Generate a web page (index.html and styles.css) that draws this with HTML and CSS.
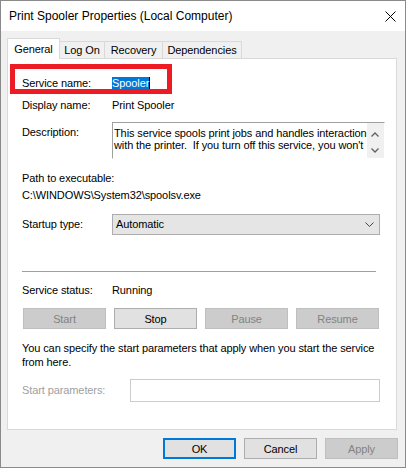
FILE: index.html
```html
<!DOCTYPE html>
<html>
<head>
	<title>Print Spooler Properties (Local Computer)</title>
	<link rel="stylesheet" href="styles.css">
</head>
<body>
<div class="window">
	<div class="titlebar">
		<span class="caption">Print Spooler Properties (Local Computer)</span>
		<span class="close">
			<svg width="11" height="11" viewBox="0 0 11 11"><path d="M0.5 0.5L10.5 10.5M10.5 0.5L0.5 10.5" stroke="#000" stroke-width="1" fill="none"/></svg>
		</span>
	</div>
	<div class="client">
		<div class="tabs">
			<div class="tab active t-general">General</div>
			<div class="tab t-logon">Log On</div>
			<div class="tab t-recovery">Recovery</div>
			<div class="tab t-deps">Dependencies</div>
		</div>
		<div class="page">
			<!-- red marker drawn over the service name -->
			<div class="mark"></div>

			<div class="field r-name">
				<span class="lbl">Service name:</span>
				<span class="sel">Spooler</span>
			</div>
			<div class="field r-display">
				<span class="lbl">Display name:</span>
				<span>Print Spooler</span>
			</div>
			<div class="field r-desc">
				<span class="lbl">Description:</span>
				<div class="desc">
					<div class="desc-text">This service spools print jobs and handles interaction
with the printer.  If you turn off this service, you won't</div>
					<div class="vscroll">
						<svg class="arr-up" width="8" height="5" viewBox="0 0 8 5"><path d="M0.5 4.5L4 1L7.5 4.5" stroke="#606060" stroke-width="1.3" fill="none"/></svg>
						<svg class="arr-down" width="8" height="5" viewBox="0 0 8 5"><path d="M0.5 0.5L4 4L7.5 0.5" stroke="#606060" stroke-width="1.3" fill="none"/></svg>
					</div>
				</div>
			</div>
			<div class="r-path-lbl">Path to executable:</div>
			<div class="r-path">C:\WINDOWS\System32\spoolsv.exe</div>
			<div class="field r-startup">
				<span class="lbl">Startup type:</span>
				<div class="combo">
					<span>Automatic</span>
					<svg class="chev" width="9" height="5" viewBox="0 0 9 5"><path d="M0.5 0.5L4.5 4.5L8.5 0.5" stroke="#444" stroke-width="1" fill="none"/></svg>
				</div>
			</div>

			<div class="sep"></div>

			<div class="field r-status">
				<span class="lbl">Service status:</span>
				<span>Running</span>
			</div>
			<div class="svc-buttons">
				<button class="btn" disabled>Start</button>
				<button class="btn">Stop</button>
				<button class="btn" disabled>Pause</button>
				<button class="btn" disabled>Resume</button>
			</div>
			<p class="para">You can specify the start parameters that apply when you start the service<br>from here.</p>
			<div class="field r-params">
				<span class="lbl">Start parameters:</span>
				<div class="params-box"></div>
			</div>
		</div>
		<div class="footer">
			<button class="btn default">OK</button>
			<button class="btn">Cancel</button>
			<button class="btn" disabled>Apply</button>
		</div>
	</div>
</div>
</body>
</html>
```

FILE: styles.css
```css
*{
	box-sizing: border-box;
}
body{
	margin: 0;
	font-family: "Liberation Sans", Arial, sans-serif;
	font-size: 11px;
	letter-spacing: -0.1px;
	color: #000;
	background: #fff;
}
.window{
	width: 406px;
	height: 468px;
	border: 1px solid #8a8a8a;
	background: #f0f0f0;
	display: flex;
	flex-direction: column;
}
.titlebar{
	height: 30px;
	flex: none;
	background: #fff;
	display: flex;
	align-items: center;
	padding-left: 8px;
}
.caption{
	font-size: 12px;
	line-height: 16px;
	letter-spacing: 0;
}
.close{
	margin-left: auto;
	width: 30px;
	height: 30px;
	display: flex;
	align-items: center;
	justify-content: center;
}
.client{
	flex: 1;
	padding: 7px 8px 0 6px;
	display: flex;
	flex-direction: column;
}

/* tabs */
.tabs{
	display: flex;
	align-items: flex-end;
	height: 20px;
}
.tab{
	height: 17px;
	padding-top: 2px;
	line-height: 13px;
	text-align: center;
	background: #f0f0f0;
	border-top: 1px solid #d9d9d9;
	border-right: 1px solid #d9d9d9;
}
.tab.active{
	height: 21px;
	margin-bottom: -1px;
	padding-top: 4px;
	background: #fff;
	border-left: 1px solid #d9d9d9;
	position: relative;
	z-index: 1;
}
.t-general{ width: 53px; }
.t-logon{ width: 45px; }
.t-recovery{ width: 58px; }
.t-deps{ width: 79px; }

/* property page */
.page{
	height: 372px;
	flex: none;
	background: #fff;
	border: 1px solid #d9d9d9;
	padding: 18px 16px 0 14px;
	position: relative;
	line-height: 13px;
}
.mark{
	position: absolute;
	left: 2px;
	top: 5px;
	width: 162px;
	height: 30px;
	border: 5px solid #ed1c24;
}
.field{
	display: flex;
}
.lbl{
	width: 90px;
	flex: none;
}
.sel{
	background: #0078d7;
	color: #fff;
	border-right: 1px solid #000;
}
.r-display{ margin-top: 9px; }
.r-desc{ margin-top: 10px; }
.r-desc .lbl{ padding-top: 4px; }
.desc{
	flex: 1;
	height: 37px;
	display: flex;
	border: 1px solid;
	border-color: #a0a0a0 #fff #fff #a0a0a0;
}
.desc-text{
	flex: 1;
	padding: 4px 0 0 1px;
	line-height: 12px;
	white-space: pre;
	overflow: hidden;
}
.vscroll{
	width: 17px;
	flex: none;
	background: #f0f0f0;
	display: flex;
	flex-direction: column;
	align-items: center;
	padding-top: 9px;
}
.vscroll svg{ display: block; }
.arr-down{ margin-top: 11px; }
.r-path-lbl{ margin-top: 13px; }
.r-path{ margin-top: 4px; }
.r-startup{ margin-top: 12px; }
.r-startup .lbl{ padding-top: 4px; }
.combo{
	flex: 1;
	height: 21px;
	display: flex;
	align-items: center;
	padding-left: 3px;
	background: #e5e5e5;
	border: 1px solid #adadad;
}
.chev{
	margin-left: auto;
	margin-right: 5px;
}
.sep{
	margin-top: 36px;
	margin-right: 4px;
	height: 1px;
	background: #a0a0a0;
}
.r-status{ margin-top: 12px; }
.svc-buttons{
	margin-top: 11px;
	margin-left: 1px;
	margin-right: 1px;
	display: grid;
	grid-template-columns: repeat(4, 1fr);
	gap: 8px;
}
.svc-buttons .btn{ width: auto; }
.para{
	margin: 12px 0 0;
	line-height: 14px;
	white-space: nowrap;
}
.r-params{ margin-top: 10px; }
.r-params .lbl{
	width: 108px;
	padding-top: 5px;
	color: #a0a0a0;
}
.params-box{
	flex: 1;
	height: 23px;
	background: #fff;
	border: 1px solid #cccccc;
}

/* buttons */
.btn{
	width: 73px;
	height: 21px;
	padding: 0;
	font-family: "Liberation Sans", Arial, sans-serif;
	font-size: 11px;
	letter-spacing: -0.1px;
	color: #000;
	background: #e1e1e1;
	border: 1px solid #adadad;
	border-radius: 0;
}
.btn.default{
	border: 2px solid #0078d7;
}
.btn:disabled{
	background: #cccccc;
	border-color: #bfbfbf;
	color: #838383;
}
.footer{
	display: flex;
	justify-content: flex-end;
	gap: 8px;
	padding-top: 8px;
	margin-right: -1px;
}
```
